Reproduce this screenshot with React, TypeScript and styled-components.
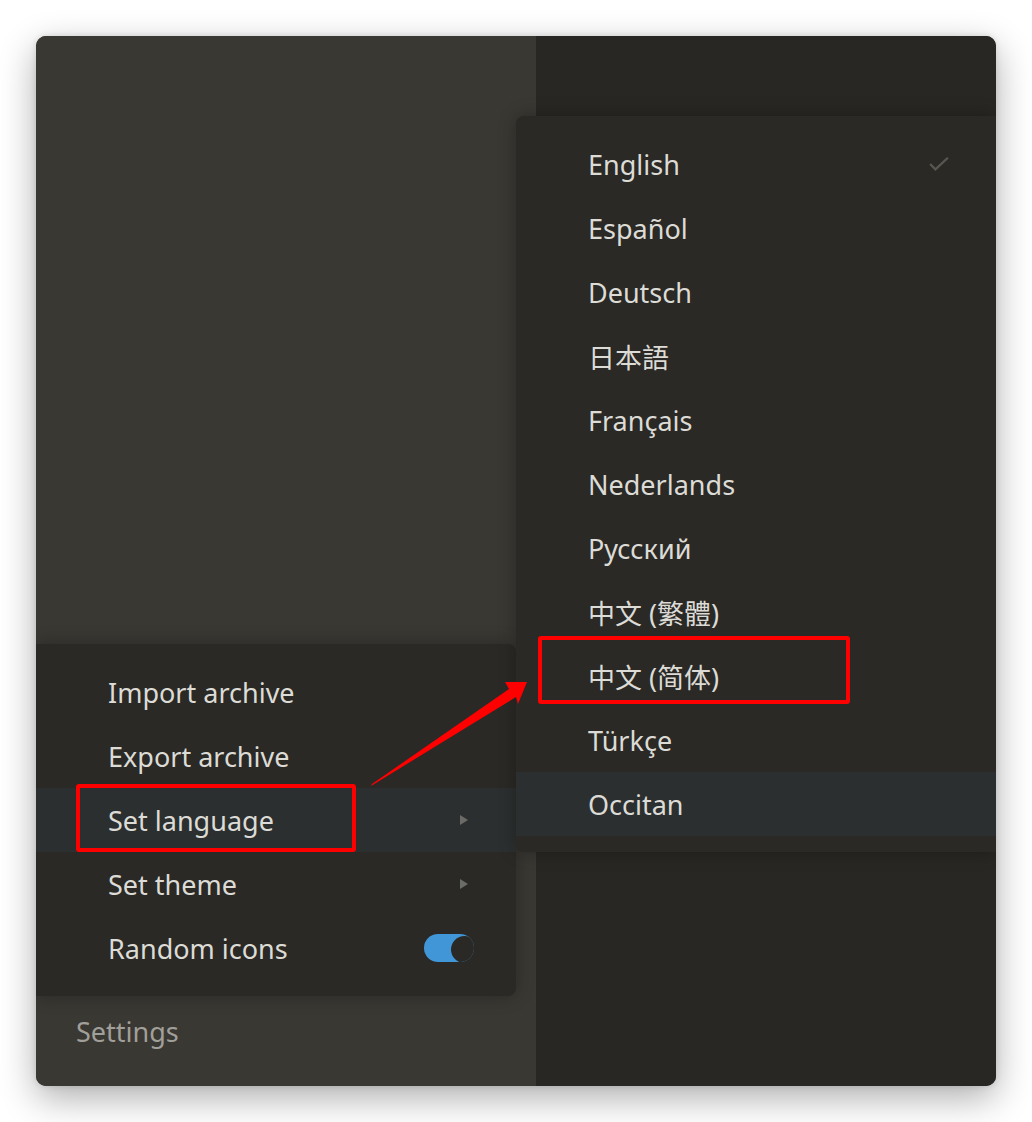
import styled, { createGlobalStyle } from "styled-components";

const FONT = `"Noto Sans", "Noto Sans CJK SC", "Noto Sans CJK TC", "Noto Sans CJK JP", sans-serif`;

const GlobalStyle = createGlobalStyle`
  html, body {
    margin: 0;
    padding: 0;
    background: #ffffff;
  }
  body {
    font-family: ${FONT};
    -webkit-font-smoothing: antialiased;
  }
`;

const LANGUAGES = [
  "English",
  "Español",
  "Deutsch",
  "日本語",
  "Français",
  "Nederlands",
  "Русский",
  "中文 (繁體)",
  "中文 (简体)",
  "Türkçe",
  "Occitan",
];

const App = () => {
  return (
    <>
      <GlobalStyle />
      <Page>
        <Window>
          <Sidebar>
            <SettingsLabel>Settings</SettingsLabel>
          </Sidebar>
          <Content />

          <SettingsMenu>
            <Item>
              <span>Import archive</span>
            </Item>
            <Item>
              <span>Export archive</span>
            </Item>
            <Item $active>
              <span>Set language</span>
              <Caret />
            </Item>
            <Item>
              <span>Set theme</span>
              <Caret />
            </Item>
            <Item>
              <span>Random icons</span>
              <Toggle>
                <Knob />
              </Toggle>
            </Item>
          </SettingsMenu>

          <LanguageMenu>
            {LANGUAGES.map((lang, i) => (
              <Item key={lang} $active={i === LANGUAGES.length - 1}>
                <span>{lang}</span>
                {i === 0 && (
                  <Check viewBox="0 0 24 18">
                    <polyline points="2,9 8,15 22,2" />
                  </Check>
                )}
              </Item>
            ))}
          </LanguageMenu>
        </Window>

        {/* annotation layer drawn over the screenshot */}
        <Mark $x={76} $y={784} $w={280} $h={68} />
        <Mark $x={538} $y={636} $w={312} $h={68} />
        <ArrowSvg width="1032" height="1122" viewBox="0 0 1032 1122">
          <polygon points="371,786 516,697 518,704 527,682 505,682 509,689 372,784" />
        </ArrowSvg>
      </Page>
    </>
  );
};

const Page = styled.div`
  position: relative;
  width: 1032px;
  height: 1122px;
  padding: 36px;
  box-sizing: border-box;
  background: #ffffff;
`;

const Window = styled.div`
  position: relative;
  display: flex;
  width: 960px;
  height: 1050px;
  border-radius: 10px;
  overflow: hidden;
  background: #282723;
  box-shadow: 0 12px 36px rgba(0, 0, 0, 0.32), 0 0 6px rgba(0, 0, 0, 0.12);
`;

const Sidebar = styled.div`
  width: 500px;
  display: flex;
  flex-direction: column;
  justify-content: flex-end;
  background: #3a3833;
`;

const SettingsLabel = styled.div`
  padding: 0 0 34px 40px;
  font-size: 27px;
  line-height: 40px;
  color: #a19f99;
`;

const Content = styled.div`
  flex: 1;
  background: #282723;
`;

const Menu = styled.div`
  position: absolute;
  padding: 16px 0;
  background: #2a2925;
  box-shadow: 0 0 18px rgba(0, 0, 0, 0.28);
`;

const SettingsMenu = styled(Menu)`
  left: 0;
  top: 608px;
  width: 480px;
  border-radius: 0 8px 8px 0;
`;

const LanguageMenu = styled(Menu)`
  left: 480px;
  top: 80px;
  right: 0;
  border-radius: 8px 0 0 8px;
`;

const Item = styled.div<{ $active?: boolean }>`
  display: flex;
  align-items: center;
  justify-content: space-between;
  height: 64px;
  padding: 0 42px 0 72px;
  font-size: 27px;
  color: #dcdbd6;
  background: ${(p) => (p.$active ? "#2c2f2f" : "transparent")};
  white-space: nowrap;
`;

const Caret = styled.span`
  width: 0;
  height: 0;
  margin-right: 6px;
  border-top: 5px solid transparent;
  border-bottom: 5px solid transparent;
  border-left: 8px solid #6b6b67;
`;

const Toggle = styled.span`
  position: relative;
  width: 50px;
  height: 28px;
  border-radius: 14px;
  overflow: hidden;
  background: #4196d8;
`;

const Knob = styled.span`
  position: absolute;
  top: 2px;
  right: -4px;
  width: 27px;
  height: 27px;
  border-radius: 50%;
  background: #2a2925;
`;

const Check = styled.svg`
  width: 22px;
  height: 16px;
  margin-right: 4px;
  fill: none;
  stroke: #58574f;
  stroke-width: 2.6;
`;

const Mark = styled.div<{ $x: number; $y: number; $w: number; $h: number }>`
  position: absolute;
  left: ${(p) => p.$x}px;
  top: ${(p) => p.$y}px;
  width: ${(p) => p.$w}px;
  height: ${(p) => p.$h}px;
  box-sizing: border-box;
  border: 4px solid #ff0000;
  border-radius: 3px;
`;

const ArrowSvg = styled.svg`
  position: absolute;
  left: 0;
  top: 0;
  pointer-events: none;
  fill: #ff0000;
`;

export default App;
